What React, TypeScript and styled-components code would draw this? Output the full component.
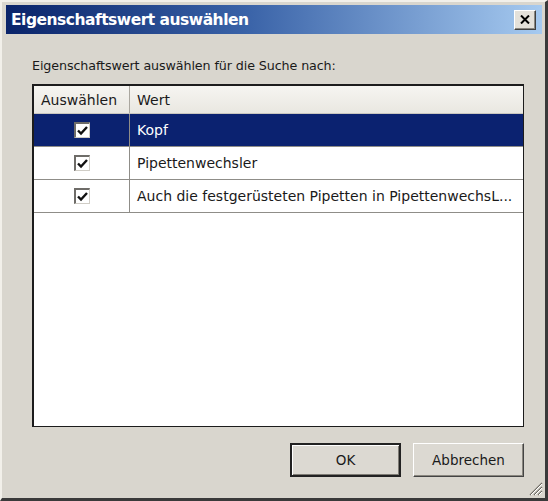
import React from "react";
import styled, { createGlobalStyle } from "styled-components";

const Global = createGlobalStyle`
  html, body { margin: 0; padding: 0; background: #d8d5cd; }
  * { box-sizing: border-box; }
`;

const Frame = styled.div`
  position: relative;
  width: 548px;
  height: 501px;
  background: #d9d6ce;
  border-left: 2px solid #f2f0ea;
  border-top: 2px solid #f2f0ea;
  border-right: 3px solid #3a3a3a;
  border-bottom: 3px solid #3a3a3a;
  display: flex;
  flex-direction: column;
  font-family: "DejaVu Sans", "Liberation Sans", sans-serif;
`;

const TitleBar = styled.div`
  margin: 3px 3px 0 4px;
  height: 29px;
  background: linear-gradient(to right, #0a246a 0%, #3a63a8 45%, #a6caf0 100%);
  display: flex;
  align-items: center;
  justify-content: space-between;
  padding: 0 6px 0 5px;
`;

const Title = styled.span`
  color: #fff;
  font-family: "DejaVu Sans", sans-serif;
  font-weight: bold;
  font-size: 15.5px;
  letter-spacing: -0.5px;
`;

const CloseBtn = styled.div`
  width: 22px;
  height: 20px;
  background: #e4e1da;
  border-top: 1px solid #ffffff;
  border-left: 1px solid #ffffff;
  border-right: 1px solid #404040;
  border-bottom: 1px solid #404040;
  box-shadow: inset -1px -1px 0 #8a8780;
  display: flex;
  align-items: center;
  justify-content: center;
`;

const Content = styled.div`
  flex: 1;
  display: flex;
  flex-direction: column;
  padding: 24px 21px 21px 30px;
`;

const Prompt = styled.div`
  font-size: 12.7px;
  color: #1a1a1a;
  margin-bottom: 11px;
  letter-spacing: -0.1px;
`;

const ListBox = styled.div`
  flex: 1;
  background: #fff;
  border: 2px solid #1c1c1c;
  border-right-width: 1px;
  border-bottom-width: 1px;
  display: flex;
  flex-direction: column;
`;

const Header = styled.div`
  display: grid;
  grid-template-columns: 96px 1fr;
  height: 28px;
  background: linear-gradient(#f6f5f1, #e9e7e1);
  border-bottom: 1px solid #c9c6bf;
`;

const HeadCell = styled.div<{ $divider?: boolean }>`
  display: flex;
  align-items: center;
  padding-left: 7px;
  font-size: 14px;
  color: #1a1a1a;
  border-right: ${(p) => (p.$divider ? "1px solid #aaa79f" : "none")};
`;

const Row = styled.div<{ $selected?: boolean }>`
  display: grid;
  grid-template-columns: 96px 1fr;
  height: 33px;
  background: ${(p) => (p.$selected ? "#0b2270" : "#fff")};
  color: ${(p) => (p.$selected ? "#fff" : "#1a1a1a")};
  border-bottom: 1px solid #8f8d88;
`;

const CheckCell = styled.div`
  display: flex;
  align-items: center;
  justify-content: center;
  border-right: 1px solid #8f8d88;
`;

const TextCell = styled.div`
  display: flex;
  align-items: center;
  padding-left: 7px;
  font-size: 14px;
  white-space: nowrap;
  overflow: hidden;
`;

const Box = styled.div`
  width: 16px;
  height: 16px;
  background: #fff;
  border-top: 2px solid #6e6c68;
  border-left: 2px solid #6e6c68;
  border-right: 1px solid #d0cdc6;
  border-bottom: 1px solid #d0cdc6;
  display: flex;
  align-items: center;
  justify-content: center;
`;

const Footer = styled.div`
  display: flex;
  justify-content: flex-end;
  gap: 12px;
  padding-top: 16px;
`;

const Button = styled.div<{ $default?: boolean }>`
  width: 111px;
  height: 34px;
  display: flex;
  align-items: center;
  justify-content: center;
  font-size: 13.5px;
  color: #1a1a1a;
  background: #dcd9d2;
  border: ${(p) => (p.$default ? "2px solid #222" : "1px solid #fff")};
  ${(p) => (p.$default ? "" : "border-right-color: #444; border-bottom-color: #444;")}
  box-shadow: ${(p) =>
    p.$default
      ? "inset 1px 1px 0 #fff, inset -1px -1px 0 #7e7b74"
      : "inset -1px -1px 0 #8a877f"};
`;

const Grip = styled.svg`
  position: absolute;
  right: 2px;
  bottom: 2px;
`;

const Check = () => (
  <svg width="11" height="10" viewBox="0 0 11 10">
    <path d="M1 4.5 L4 7.5 L10 1" stroke="#111" strokeWidth="2.4" fill="none" />
  </svg>
);

const rows = [
  { text: "Kopf", selected: true },
  { text: "Pipettenwechsler" },
  { text: "Auch die festgerüsteten Pipetten in PipettenwechsL..." },
];

export default function App() {
  return (
    <>
      <Global />
      <Frame>
        <TitleBar>
          <Title>Eigenschaftswert auswählen</Title>
          <CloseBtn>
            <svg width="10" height="9" viewBox="0 0 10 9">
              <path d="M1 0.5 L9 8.5 M9 0.5 L1 8.5" stroke="#000" strokeWidth="2" />
            </svg>
          </CloseBtn>
        </TitleBar>
        <Content>
          <Prompt>Eigenschaftswert auswählen für die Suche nach:</Prompt>
          <ListBox>
            <Header>
              <HeadCell $divider>Auswählen</HeadCell>
              <HeadCell>Wert</HeadCell>
            </Header>
            {rows.map((r) => (
              <Row key={r.text} $selected={r.selected}>
                <CheckCell>
                  <Box>
                    <Check />
                  </Box>
                </CheckCell>
                <TextCell>{r.text}</TextCell>
              </Row>
            ))}
          </ListBox>
          <Footer>
            <Button $default>OK</Button>
            <Button>Abbrechen</Button>
          </Footer>
        </Content>
        <Grip width="16" height="16" viewBox="0 0 16 16">
          <path d="M15 3 L3 15 M15 7 L7 15 M15 11 L11 15" stroke="#6e6b64" strokeWidth="1.2" />
          <path d="M15 4 L4 15 M15 8 L8 15 M15 12 L12 15" stroke="#fff" strokeWidth="1" />
        </Grip>
      </Frame>
    </>
  );
}
